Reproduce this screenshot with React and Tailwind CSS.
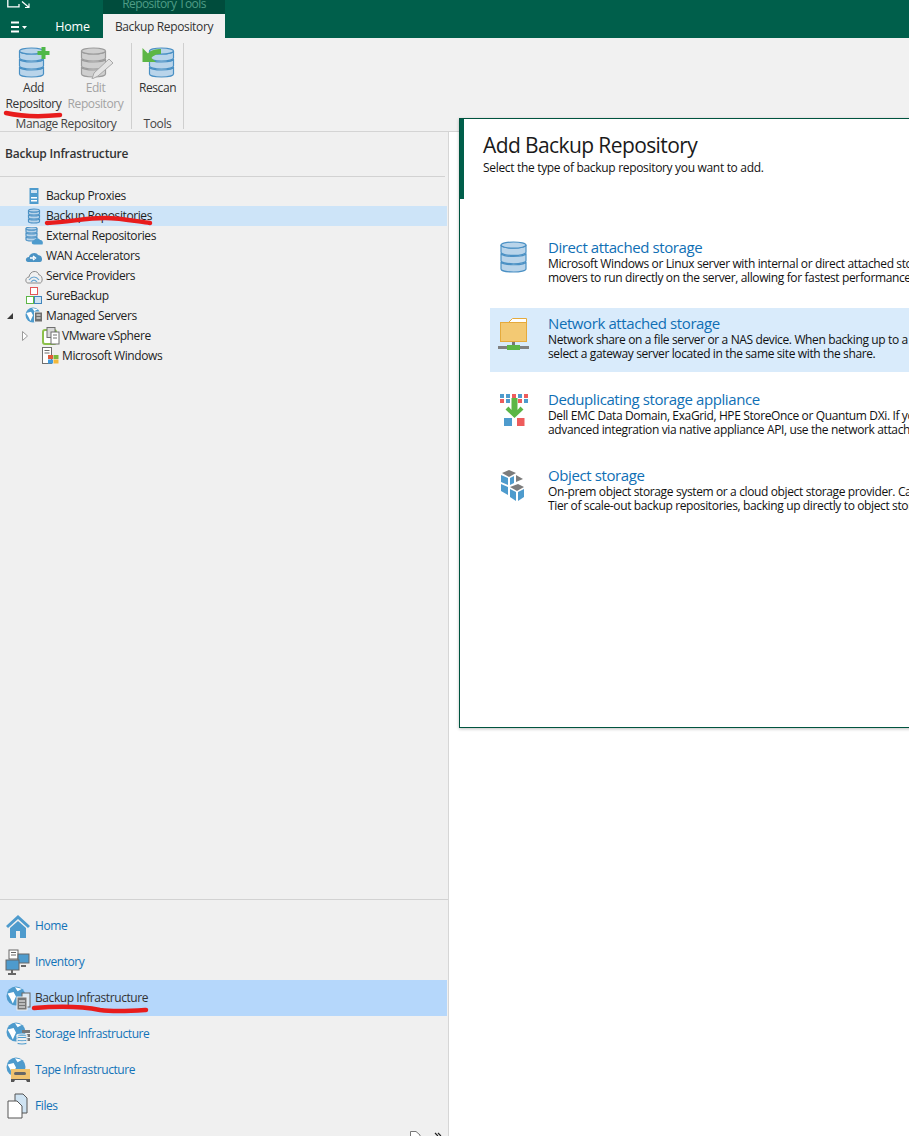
const F = { fontFamily: '"Open Sans", "Noto Sans", sans-serif' };

function Db({ x = 0, y = 0, w = 24, h = 30, fill = "#b9d4ea", stroke = "#4a90c4" }) {
  const ry = h / 10;
  const seg = (h - 2 * ry) / 3;
  return (
    <g transform={`translate(${x} ${y})`} fill={fill} stroke={stroke} strokeWidth="1.2">
      {[2, 1, 0].map((i) => (
        <path key={i} d={`M0 ${ry + i * seg}V${ry + (i + 1) * seg - 1}A${w / 2} ${ry} 0 0 0 ${w} ${ry + (i + 1) * seg - 1}V${ry + i * seg}A${w / 2} ${ry} 0 0 1 0 ${ry + i * seg}Z`} />
      ))}
      <ellipse cx={w / 2} cy={ry} rx={w / 2} ry={ry} />
    </g>
  );
}

function Ico({ s = 20, children, className = "" }) {
  return (
    <svg width={s} height={s} viewBox={`0 0 ${s} ${s}`} className={`shrink-0 ${className}`}>
      {children}
    </svg>
  );
}

function Globe({ s = 22 }) {
  const r = s / 2 - 0.5;
  return (
    <g>
      <circle cx={s / 2} cy={s / 2} r={r} fill="#4e9bcd" />
      <path d={`M${s * 0.08} ${s * 0.38}L${s * 0.38} ${s * 0.3}L${s * 0.5} ${s * 0.52}L${s * 0.34} ${s * 0.88}L${s * 0.22} ${s * 0.62}Z`} fill="#fff" />
      <path d={`M${s * 0.45} ${s * 0.06}L${s * 0.8} ${s * 0.14}L${s * 0.58} ${s * 0.26}Z`} fill="#fff" />
    </g>
  );
}

function TreeRow({ icon, label, selected, mark }) {
  return (
    <div className={`h-5 flex items-center pl-[3px] ${selected ? "bg-[#cde4f8]" : ""}`}>
      <div className="w-[19px] flex justify-center shrink-0">{mark}</div>
      <div className="flex justify-center shrink-0 w-[24px]">{icon}</div>
      <span className="text-[12px] text-[#1e1e1e] tracking-[-0.4px] whitespace-nowrap">{label}</span>
    </div>
  );
}

function NavRow({ icon, label, selected }) {
  return (
    <div className={`h-9 flex items-center pl-[5px] ${selected ? "bg-[#b5d7fb]" : ""}`}>
      <div className="w-[30px] flex shrink-0">{icon}</div>
      <span className={`text-[12px] tracking-[-0.42px] whitespace-nowrap ${selected ? "text-[#333]" : "text-[#1273b8]"}`}>{label}</span>
    </div>
  );
}

function Option({ icon, title, l1, l2, selected }) {
  return (
    <div className={`h-16 ml-[30px] pl-[58px] relative ${selected ? "bg-[#d9ebfb]" : ""}`}>
      <div className="absolute left-[8px] top-[8px]">{icon}</div>
      <div className="pt-[5px] whitespace-nowrap">
        <div className="text-[15px] leading-[20px] text-[#0f6fb5] tracking-[-0.4px]">{title}</div>
        <div className="text-[12px] leading-[14px] text-[#111] tracking-[-0.37px]">{l1}</div>
        <div className="text-[12px] leading-[14px] text-[#111] tracking-[-0.37px]">{l2}</div>
      </div>
    </div>
  );
}

function RibbonBtn({ icon, l1, l2, disabled, w }) {
  const c = disabled ? "text-[#a3a3a3]" : "text-[#333]";
  return (
    <div className={`flex flex-col items-center ${w}`}>
      <div className="h-[37px] flex items-start">{icon}</div>
      <div className={`text-[12px] leading-[16px] tracking-[-0.4px] whitespace-nowrap ${c}`}>{l1}</div>
      {l2 && <div className={`text-[12px] leading-[16px] tracking-[-0.4px] whitespace-nowrap ${c}`}>{l2}</div>}
    </div>
  );
}

export default function App() {
  return (
    <div style={F} className="relative w-[909px] h-[1136px] overflow-hidden bg-white">
      {/* Title bar */}
      <div className="h-[38px] bg-[#005f4b] relative flex items-end">
        <div className="absolute left-[103px] top-0 w-[122px] h-[14px] bg-[#004c3c] overflow-hidden flex justify-center items-end">
          <span className="text-[12px] leading-[14px] text-[#4f9d87] tracking-[-0.57px] relative top-[-3px]">Repository Tools</span>
        </div>
        <svg width="24" height="10" viewBox="0 0 24 10" className="absolute left-[7px] top-0">
          <path d="M.8 0V6.800H12V4" fill="none" stroke="#fff" strokeWidth="1.300" />
          <path d="M15 1.500L22 7.500M22 3.500V7.500H18" fill="none" stroke="#fff" strokeWidth="1.200" />
        </svg>
        <div className="w-[42px] h-6 flex items-center pl-[11px] gap-[2px] pt-[2px]">
          <svg width="18" height="12" viewBox="0 0 18 12">
            <path d="M0 1.500H8M0 6H8M0 10.500H8" stroke="#fff" strokeWidth="1.800" />
            <path d="M11 5H16L13.500 8Z" fill="#fff" />
          </svg>
        </div>
        <div className="w-[61px] h-6 pt-[2px] flex items-center justify-center text-[12.5px] text-white tracking-[-0.2px]">Home</div>
        <div className="w-[122px] h-6 pt-[2px] bg-[#f1f1f1] flex items-center justify-center text-[12px] text-[#333] tracking-[-0.35px]">Backup Repository</div>
      </div>

      {/* Ribbon */}
      <div className="h-[94px] bg-[#f1f1f1] border-b border-[#d4d4d4] flex">
        <div className="w-[132px] border-r border-[#cfcfcf] h-[86px] mt-[5px] flex flex-col shrink-0">
          <div className="flex pl-[1px]">
            <RibbonBtn
              w="w-[65px]"
              l1="Add"
              l2="Repository"
              icon={
                <Ico s={36}>
                  <Db x={3.500} y={5} w={24} h={30} />
                  <path d="M25.500 4H29.500V8H33.500V12H29.500V16H25.500V12H21.500V8H25.500Z" fill="#4fb848" />
                </Ico>
              }
            />
            <RibbonBtn
              w="w-[59px]"
              disabled
              l1="Edit"
              l2="Repository"
              icon={
                <Ico s={36}>
                  <Db x={3.500} y={5} w={24} h={30} fill="#cfcfcf" stroke="#9c9c9c" />
                  <path d="M31 16L35 20L20 33L14 36L16 30Z" fill="#e4e4e4" stroke="#a8a8a8" />
                </Ico>
              }
            />
          </div>
          <div className="text-[12px] leading-[14px] text-[#444] tracking-[-0.4px] text-center mt-[5px] w-[132px]">Manage Repository</div>
        </div>
        <div className="w-[52px] border-r border-[#cfcfcf] h-[86px] mt-[5px] flex flex-col shrink-0">
          <RibbonBtn
            w="w-[51px]"
            l1="Rescan"
            icon={
              <Ico s={36}>
                <Db x={9.500} y={5} w={24} h={30} />
                <path d="M2.500 5V19H16L11.500 15C13 12.500 17 11 21 11V6C16 6 11 7 8 10.500Z" fill="#5cb646" />
              </Ico>
            }
          />
          <div className="text-[12px] leading-[14px] text-[#444] tracking-[-0.4px] text-center mt-[21px]">Tools</div>
        </div>
      </div>

      {/* Body */}
      <div className="flex h-[1004px]">
        <div className="w-[449px] shrink-0 bg-[#f0f0f0] border-r border-[#d6d6d6] flex flex-col">
          <div className="h-[45px] pl-[5px] pt-[14px] text-[12px] leading-[16px] font-semibold text-[#333] tracking-[-0.2px] border-b border-[#d2d2d2] mr-[3px]">Backup Infrastructure</div>
          <div className="pt-[9px] flex-1 pr-[1px]">
            <TreeRow label="Backup Proxies" icon={<Ico s={18}><rect x="4.500" y="1" width="9" height="16" fill="#4e9bcd" /><rect x="6" y="3" width="6" height="3" fill="#cfe3f2" /><rect x="6" y="10" width="6" height="1.500" fill="#fff" /><rect x="6" y="13" width="6" height="1.500" fill="#fff" /></Ico>} />
            <TreeRow selected label="Backup Repositories" icon={<Ico s={18}><Db x={3.500} y={2} w={11} h={15} /></Ico>} />
            <TreeRow label="External Repositories" icon={<Ico s={18}><Db x={1} y={0} w={11} h={15} /><path d="M9 17.500C6 17.500 6 13.500 9 13.500C10 11 14 11 15 13C17.500 12.500 18.500 15.500 17.500 17.500Z" fill="#4e9bcd" /></Ico>} />
            <TreeRow label="WAN Accelerators" icon={<Ico s={18}><path d="M3 15C0 15 0 10 4 10C5 5 12 5 13 8C18 8 18 15 15 15Z" fill="#4a93c4" /><path d="M5 11H9M8 9L10.500 11L8 13" stroke="#fff" strokeWidth="1.400" fill="none" /></Ico>} />
            <TreeRow label="Service Providers" icon={<Ico s={18}><path d="M3 16C0 16 0 10 4 10C5 3 13 3 14 8C18 8 18 16 15 16Z" fill="#f0f0f0" stroke="#8c8c8c" /><path d="M4 13C7 9 11 9 14 13M6 15C8 12.500 10 12.500 12 15" fill="none" stroke="#6ba7d2" strokeWidth="1.200" /></Ico>} />
            <TreeRow label="SureBackup" icon={<Ico s={18}><rect x="5.500" y="0.500" width="7" height="7" fill="#fff" stroke="#e25555" /><rect x="1.500" y="9.500" width="7" height="7" fill="#fff" stroke="#5cb646" /><rect x="9.500" y="9.500" width="7" height="7" fill="#cfe3f2" stroke="#3f85bd" /></Ico>} />
            <TreeRow
              label="Managed Servers"
              mark={<svg width="8" height="8" viewBox="0 0 8 8" className="relative left-[-3px]"><path d="M7 1V7H1Z" fill="#3a3a3a" /></svg>}
              icon={<Ico s={18}><Globe s={16} /><rect x="9.500" y="5" width="8" height="10" fill="#6f6f6f" stroke="#f0f0f0" /><path d="M11.500 8H15.500M11.500 11H15.500" stroke="#fff" /></Ico>}
            />
            <div className="h-5 flex items-center">
              <div className="w-[22px] shrink-0" />
              <svg width="6" height="10" viewBox="0 0 6 10" className="shrink-0"><path d="M.5 .5L5.500 5L.5 9.500Z" fill="#fff" stroke="#9a9a9a" /></svg>
              <div className="w-[14px] shrink-0" />
              <Ico s={18}><rect x="1" y="3" width="13" height="14" rx="2" fill="#fff" stroke="#8cc04b" strokeWidth="2" /><rect x="5" y="0.500" width="8" height="10" fill="#d8d8d8" stroke="#6f6f6f" /><rect x="9" y="5" width="8" height="12" fill="#fff" stroke="#6f6f6f" /><path d="M11 8H15M11 11H15" stroke="#6f6f6f" /></Ico>
              <span className="ml-[2px] text-[12px] text-[#1e1e1e] tracking-[-0.4px] whitespace-nowrap">VMware vSphere</span>
            </div>
            <div className="h-5 flex items-center">
              <div className="w-[42px] shrink-0" />
              <Ico s={18}><rect x="0.500" y="0.500" width="9" height="16" fill="#fff" stroke="#6f6f6f" /><path d="M2.500 3.500H7.500M2.500 6H7.500" stroke="#6f6f6f" /><rect x="6" y="8" width="5" height="4" fill="#e25a3a" /><rect x="11.500" y="8" width="5" height="4" fill="#7cb83a" /><rect x="6" y="12.500" width="5" height="4" fill="#3f9be0" /><rect x="11.500" y="12.500" width="5" height="4" fill="#f2b83a" /></Ico>
              <span className="ml-[2px] text-[12px] text-[#1e1e1e] tracking-[-0.4px] whitespace-nowrap">Microsoft Windows</span>
            </div>
          </div>
          <div className="border-t border-[#d2d2d2] h-[237px] pt-[8px] pr-[1px]">
            <NavRow
              label="Home"
              icon={<Ico s={26}><path d="M13 2L1 13L3 15L13 6L23 15L25 13Z" fill="#4e9bcd" /><path d="M5 15L13 8L21 15V25H15V18H11V25H5Z" fill="#4e9bcd" /></Ico>}
            />
            <NavRow
              label="Inventory"
              icon={<Ico s={26}><rect x="4" y="1" width="9" height="9" fill="#fff" stroke="#666" /><path d="M6 3.500H11M6 6H11" stroke="#666" /><rect x="13" y="5" width="11" height="9" fill="#4e9bcd" stroke="#666" /><path d="M16 17H21" stroke="#666" strokeWidth="2" /><rect x="1" y="11" width="13" height="10" fill="#4e9bcd" stroke="#666" /><path d="M7 21V24M3 25H11" stroke="#666" strokeWidth="2" /></Ico>}
            />
            <NavRow
              selected
              label="Backup Infrastructure"
              icon={<Ico s={26}><g transform="translate(1 1)"><Globe s={20} /></g><rect x="17" y="8" width="8" height="14" fill="#dbe9f5" stroke="#666" /><rect x="12" y="12" width="10" height="13" fill="#777" stroke="#eee" /><path d="M14 16H20M14 19H20M14 22H20" stroke="#fff" /></Ico>}
            />
            <NavRow
              label="Storage Infrastructure"
              icon={<Ico s={26}><g transform="translate(1 1)"><Globe s={20} /></g><path d="M17 9H25V12H17Z" fill="#777" /><path d="M19 13H25V16H19Z" fill="#777" /><path d="M21 17H25V20H21Z" fill="#777" /><Db x={12} y={13} w={10} h={12} fill="#4e9bcd" stroke="#f0f0f0" /></Ico>}
            />
            <NavRow
              label="Tape Infrastructure"
              icon={<Ico s={26}><g transform="translate(1 0)"><Globe s={20} /></g><rect x="6" y="12" width="19" height="10" fill="#f0c36f" /><rect x="9" y="15" width="12" height="3" rx="1.500" fill="#666" /><path d="M6 22H25V25H22L21 23H10L9 25H6Z" fill="#555" /></Ico>}
            />
            <NavRow
              label="Files"
              icon={<Ico s={26}><path d="M10 1H18L22 5V20H10Z" fill="#cfe3f2" stroke="#555" /><path d="M3 8H12L17 13V25H3Z" fill="#fff" stroke="#555" /></Ico>}
            />
            <div className="h-[9px] relative">
              <svg width="32" height="8" viewBox="0 0 32 8" className="absolute left-[410px] top-[7px]">
                <path d="M.5 8V.5H6L10 4V8" fill="#fff" stroke="#777" />
                <path d="M25 2L27.500 4.500L25 7M28 2L30.500 4.500L28 7" stroke="#222" strokeWidth="1.200" fill="none" />
              </svg>
            </div>
          </div>
        </div>
        <div className="flex-1 bg-white" />
      </div>

      {/* Dialog */}
      <div className="absolute left-[459px] top-[118px] w-[480px] h-[610px] bg-white border border-[#00543f] shadow-[0_1px_3px_rgba(0,0,0,0.25)]">
        <div className="absolute left-0 top-0 w-[4px] h-[80px] bg-[#005f4b]" />
        <div className="pl-[23px] pt-[11px]">
          <div className="text-[21px] leading-[30px] text-[#1a1a1a] tracking-[-0.6px] whitespace-nowrap">Add Backup Repository</div>
          <div className="text-[12px] leading-[16px] text-[#111] tracking-[-0.32px] whitespace-nowrap">Select the type of backup repository you want to add.</div>
        </div>
        <div className="mt-[56px] flex flex-col gap-3">
          <Option
            title="Direct attached storage"
            l1="Microsoft Windows or Linux server with internal or direct attached storage. This option allows data"
            l2="movers to run directly on the server, allowing for fastest performance."
            icon={<Ico s={36}><Db x={3} y={2} w={25} h={31} /></Ico>}
          />
          <Option
            selected
            title="Network attached storage"
            l1="Network share on a file server or a NAS device. When backing up to a remote share, we recommend"
            l2="select a gateway server located in the same site with the share."
            icon={
              <Ico s={36}>
                <path d="M10 7L14.500 2.500H28.500V8H10Z" fill="#fff" stroke="#e5aa3c" />
                <rect x="2.500" y="6.500" width="26" height="19" fill="#f3c973" stroke="#e5aa3c" />
                <path d="M14 26H17V31H14Z" fill="#777" />
                <path d="M0 30H31V33H0Z" fill="#808080" />
                <rect x="9" y="29" width="13" height="5" fill="#5cb646" />
              </Ico>
            }
          />
          <Option
            title="Deduplicating storage appliance"
            l1="Dell EMC Data Domain, ExaGrid, HPE StoreOnce or Quantum DXi. If you are using a different appliance,"
            l2="advanced integration via native appliance API, use the network attached storage option instead."
            icon={
              <Ico s={36}>
                {[[2,"#4e9bcd"],[8,"#4e9bcd"],[14,"#ee5c5c"],[20,"#4e9bcd"],[26,"#ee5c5c"]].map(([x,c],i) => <rect key={i} x={x} y={2} width="4" height="4" fill={c} />)}
                {[[2,"#ee5c5c"],[8,"#4e9bcd"],[20,"#ee5c5c"],[26,"#4e9bcd"]].map(([x,c],i) => <rect key={i} x={x} y={7} width="4" height="4" fill={c} />)}
                <path d="M13.500 6H19.500V18L22.500 14.500L25.500 17.500L16.500 26L7.500 17.500L10.500 14.500L13.500 18Z" fill="#5cb646" />
                <rect x="6" y="26" width="8" height="8" fill="#4e9bcd" />
                <rect x="19" y="26" width="7.500" height="8" fill="#ee5c5c" />
              </Ico>
            }
          />
          <Option
            title="Object storage"
            l1="On-prem object storage system or a cloud object storage provider. Can be used as a Capacity or Archive"
            l2="Tier of scale-out backup repositories, backing up directly to object storage is also supported."
            icon={
              <Ico s={36}>
                <g transform="translate(-2 1)">
                  <path d="M13 1L20 4L13 8L6 4Z" fill="#7c7c7c" />
                  <path d="M5 6L12 9V16L5 13Z" fill="#4e9bcd" />
                  <path d="M14 9L18 7V14L14 16Z" fill="#4e9bcd" />
                  <path d="M20 6L27 10L20 13Z" fill="#7c7c7c" />
                  <path d="M5 15L12 18V26L5 22Z" fill="#4e9bcd" />
                  <path d="M14 18L22 15L28 18L21 22Z" fill="#7c7c7c" />
                  <path d="M14 20L20 23V32L14 28Z" fill="#4e9bcd" />
                  <path d="M22 23L28 20V28L22 32Z" fill="#4e9bcd" />
                </g>
              </Ico>
            }
          />
        </div>
      </div>

      {/* Red annotation strokes */}
      <svg width="909" height="1136" viewBox="0 0 909 1136" className="absolute inset-0 pointer-events-none">
        <g fill="none" stroke="#e81c1c" strokeLinecap="round" strokeWidth="4.500">
          <path d="M6 113C20 116 40 117 60 115" />
          <path d="M47 223C70 222 85 218 105 218C120 218 135 221 150 223" />
          <path d="M34 1008C60 1006 80 1006 100 1010C115 1012 130 1011 146 1010" />
        </g>
      </svg>
    </div>
  );
}
